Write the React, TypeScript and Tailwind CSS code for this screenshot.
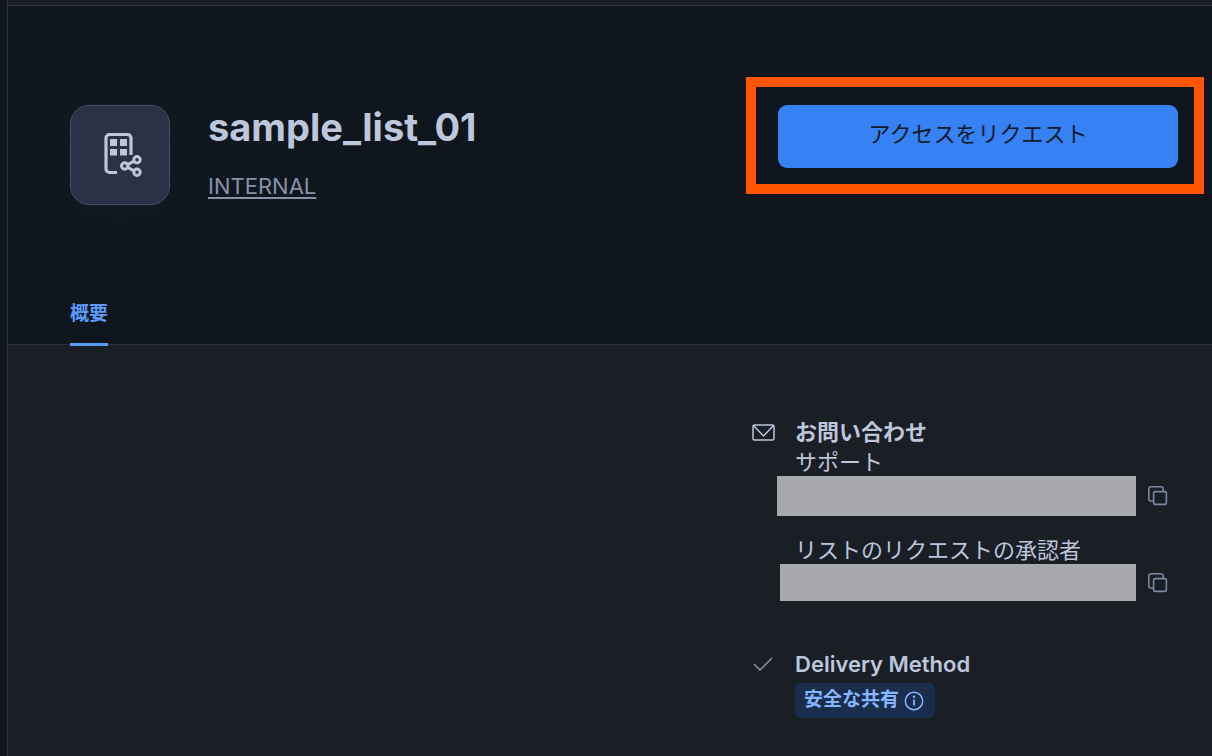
const CopyIcon = () => (
  <svg width="20" height="20" viewBox="0 0 20 20" fill="none" stroke="currentColor" strokeWidth="1.6">
    <rect x="5.6" y="5.6" width="12.8" height="12.8" rx="1.8" />
    <path d="M5.5 15H2.800A2 2 0 0 1 .8 13V2.800A2 2 0 0 1 2.800.8h10.400a2 2 0 0 1 2 2v2.700" />
  </svg>
);

const ListingIcon = () => (
  <svg width="40" height="46" viewBox="0 0 40 46" fill="none" stroke="currentColor">
    <path d="M14 40.5H6.500a3.500 3.500 0 0 1-3.500-3.500V6a3.500 3.500 0 0 1 3.500-3.500h18a3.500 3.500 0 0 1 3.500 3.500v17" strokeWidth="3.200" />
    <path d="M7 7h7v7H7zM17 7h7v7h-7zM7 17h7v6.500H7zM17 17h7v6.500h-7z" fill="currentColor" stroke="none" />
    <g strokeWidth="3">
      <circle cx="21.700" cy="34" r="3.200" />
      <circle cx="34" cy="27.700" r="3.200" />
      <circle cx="34" cy="40.200" r="3.200" />
      <path d="m24.500 32.600 6.700-3.400M24.500 35.400l6.700 3.400" />
    </g>
  </svg>
);

const MailIcon = () => (
  <svg width="23" height="17" viewBox="0 0 23 17" fill="none" stroke="currentColor" strokeWidth="1.500">
    <rect x="1" y="1" width="21" height="15" rx="1.500" />
    <path d="m1.500 1.500 10 10.500 10-10.500" />
  </svg>
);

const CheckIcon = () => (
  <svg width="20" height="14" viewBox="0 0 20 14" fill="none" stroke="currentColor" strokeWidth="1.400">
    <path d="m1 7 6 6L19 1" />
  </svg>
);

const InfoIcon = () => (
  <svg width="20" height="20" viewBox="0 0 20 20" fill="none" stroke="currentColor" strokeWidth="1.500">
    <circle cx="10" cy="10" r="8.700" />
    <path d="M10 8.500v6" strokeWidth="1.800" />
    <circle cx="10" cy="5.800" r="1.200" fill="currentColor" stroke="none" />
  </svg>
);

const CopyButton = ({ label }: { label: string }) => (
  <button type="button" aria-label={label} className="ml-3 cursor-pointer text-[#7d879f]">
    <CopyIcon />
  </button>
);

const App = () => {
  return (
    <div className="flex min-h-screen w-full bg-[#0f161d] font-[Inter,'Noto_Sans_CJK_JP',sans-serif] text-[#bdc6db]">
      <aside className="w-2 shrink-0 border-r border-[#2a3042]" />
      <div className="flex min-w-0 flex-1 flex-col bg-[#1a1e25]">
        <div className="h-[6px] border-b border-[#2d3345]" />
        <header className="border-b border-[#2a3042] bg-[#0f161d] pr-[34px] pl-[62px]">
          <div className="flex items-start pt-[99px]">
            <div className="flex size-[100px] shrink-0 items-center justify-center rounded-[19px] border border-[#454e66] bg-[#2a3246] pl-[6px] shadow-[0_6px_28px_0_#121e2a]">
              <ListingIcon />
            </div>
            <div className="ml-[38px]">
              <h1 className="text-[38px] leading-11 font-bold">sample_list_01</h1>
              <a
                href="#"
                className="mt-[22px] block w-fit text-[22px] leading-[30px] text-[#8791aa] underline decoration-2 underline-offset-3"
              >
                INTERNAL
              </a>
            </div>
            <div className="relative ml-auto w-[400px]">
              <button
                type="button"
                className="h-[63px] w-full cursor-pointer rounded-[9px] bg-[#3681f3] pb-1 text-[22px] font-normal text-[#101a29]"
              >
                アクセスをリクエスト
              </button>
              <div className="pointer-events-none absolute -top-7 -right-[26px] -bottom-[26px] -left-8 border-10 border-[#ff5500]" />
            </div>
          </div>
          <nav className="mt-[92px] flex">
            <button
              type="button"
              className="-mb-[2px] h-[49px] cursor-pointer border-b-3 border-[#5b9bfa] pb-3 text-[19px] leading-8 font-bold text-[#5b9bfa]"
            >
              概要
            </button>
          </nav>
        </header>

        <main className="flex justify-end pt-[71px] pr-[34px] pb-9">
          <div className="w-[426px]">
            <section className="flex">
              <div className="flex h-8 w-[43px] shrink-0 items-center">
                <MailIcon />
              </div>
              <div className="min-w-0 flex-1">
                <h2 className="text-[22px] leading-8 font-bold">お問い合わせ</h2>
                <p className="text-[22px] leading-7">サポート</p>
                <div className="-ml-[18px] flex items-center">
                  <div className="h-10 w-[359px] bg-[#a8a9ac]" />
                  <CopyButton label="サポートをコピー" />
                </div>
                <p className="mt-5 text-[22px] leading-7">リストのリクエストの承認者</p>
                <div className="-ml-[15px] flex items-center">
                  <div className="h-[37px] w-[356px] bg-[#a8a9ac]" />
                  <CopyButton label="承認者をコピー" />
                </div>
              </div>
            </section>

            <section className="mt-[47px] flex">
              <div className="flex h-8 w-[43px] shrink-0 items-center pl-px text-[#8e98b0]">
                <CheckIcon />
              </div>
              <div>
                <h2 className="text-[22px] leading-8 font-semibold">Delivery Method</h2>
                <span className="mt-[3px] flex h-[35px] w-[140px] items-center gap-[5px] rounded-md bg-[#1a2d4b] pl-[9px] text-[19px] font-bold text-[#85b6ff]">
                  安全な共有
                  <InfoIcon />
                </span>
              </div>
            </section>
          </div>
        </main>
      </div>
    </div>
  );
};

export default App;
